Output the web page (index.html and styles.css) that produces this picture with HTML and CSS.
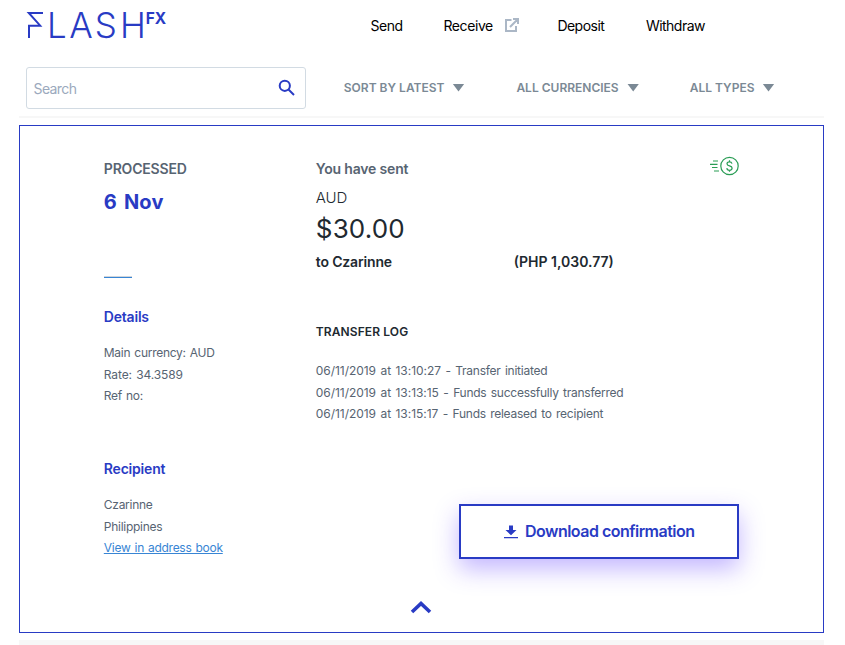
FILE: index.html
```html
<!DOCTYPE html>
<html lang="en">
<head>
<meta charset="utf-8">
<title>FlashFX</title>
<link rel="stylesheet" href="styles.css">
</head>
<body>
<header class="header">
  <svg class="logo" width="146" height="42" viewBox="0 -8 146 42" role="img" aria-label="FlashFX">
    <path class="logo-mark" d="M18 5H3.800L15.200 17.700H4V30"/>
    <text class="logo-name" y="30" x="22.700 45.600 72 98" transform="scale(.97 1)">LASH</text>
    <text class="logo-suffix" x="120.800" y="16" textLength="20.500" lengthAdjust="spacingAndGlyphs">FX</text>
  </svg>
  <nav class="nav">
    <a class="send">Send</a>
    <a class="receive">Receive</a>
    <svg class="external" width="14" height="14" viewBox="0 0 14 14"><path d="M6.500 2H1v11h10V8M8 1h5v5M13 1L5 9"/></svg>
    <a class="deposit">Deposit</a>
    <a class="withdraw">Withdraw</a>
  </nav>
</header>
<section class="filters">
  <div class="search">
    <span>Search</span>
    <svg width="18" height="18" viewBox="0 0 18 18"><circle cx="6.800" cy="6.800" r="5.100"/><path d="M10.500 10.500L16 16"/></svg>
  </div>
  <div class="filter latest"><span>SORT BY LATEST</span><i></i></div>
  <div class="filter currencies"><span>ALL CURRENCIES</span><i></i></div>
  <div class="filter types"><span>ALL TYPES</span><i></i></div>
</section>
<main class="card">
  <div class="columns">
    <div class="summary">
      <div class="status"><span>PROCESSED</span></div>
      <div class="date">6 Nov</div>
      <div class="rule"></div>
      <h3>Details</h3>
      <div class="lines">
        <p>Main currency: AUD</p>
        <p class="rate">Rate: 34.3589</p>
        <p>Ref no:</p>
      </div>
      <h3 class="recipient">Recipient</h3>
      <div class="lines">
        <p>Czarinne</p>
        <p>Philippines</p>
        <p><a>View in address book</a></p>
      </div>
    </div>
    <div class="transfer">
      <div class="sent">
        <span>You have sent</span>
        <svg width="29" height="20" viewBox="0 0 29 20"><circle cx="19.500" cy="10" r="8.700"/><path d="M3 5h5M0 8.300h7.500M2 11.500h5.500M4 15h5M22 7.600C21.600 6.200 20.700 5.800 19.500 5.800c-1.500 0-2.500.8-2.500 2 0 2.900 5.100 1.400 5.100 4.300 0 1.400-1.100 2.200-2.600 2.200s-2.500-.8-2.700-2.200M19.500 4.300v1.500M19.500 14.300v1.500"/></svg>
      </div>
      <div class="currency">AUD</div>
      <div class="amount">$30.00</div>
      <div class="to"><span class="payee">to Czarinne</span><span class="converted">(PHP 1,030.77)</span></div>
      <h4>TRANSFER LOG</h4>
      <div class="lines log">
        <p><span class="time">06/11/2019 at 13:10:27 -</span> Transfer initiated</p>
        <p><span class="time">06/11/2019 at 13:13:15 -</span> Funds successfully transferred</p>
        <p><span class="time">06/11/2019 at 13:15:17 -</span> Funds released to recipient</p>
      </div>
      <button class="download">
        <svg width="14" height="14" viewBox="0 0 14 14"><path d="M5 0.500h4v4.500h3.500L7 10.300 1.500 5H5zM0 12h14v1.300H0z"/></svg>
        <span>Download confirmation</span>
      </button>
    </div>
  </div>
  <svg class="collapse" width="22" height="14" viewBox="0 0 22 14"><path d="M2 12L11 3.500 20 12"/></svg>
</main>
<div class="next-card"></div>
</body>
</html>
```
FILE: styles.css
```css
* { box-sizing: border-box; }
body {
  margin: 0;
  height: 645px;
  overflow: hidden;
  background: #fff;
  color: #212930;
  font-family: Inter, "Liberation Sans", sans-serif;
}
h3, h4, p { margin: 0; }
svg { display: block; flex: none; fill: none; overflow: visible; }
.header { display: flex; height: 67px; padding: 0 0 0 25px; }
.logo-mark { stroke: #293bc4; stroke-width: 2; }
.logo-name { fill: #293bc4; font-size: 36px; font-weight: 300; }
.logo-suffix { fill: #293bc4; font-size: 16.500px; font-weight: 700; }
.nav {
  display: flex;
  height: 20px;
  margin: 16px 0 0 199.600px;
  color: #000;
  font-size: 14px;
  line-height: 20px;
  letter-spacing: -0.520px;
  white-space: nowrap;
}
.send { width: 72.800px; }
.receive { width: 61.600px; letter-spacing: -0.400px; }
.external { width: 14px; margin: 2px 38.400px 0 0; stroke: #abb7c6; stroke-width: 2; }
.deposit { width: 88.500px; }
.filters {
  display: flex;
  align-items: flex-start;
  height: 51px;
  margin: 0 21px 0 19px;
  padding-left: 7px;
  border-bottom: 2px solid #f7f7f7;
}
.search {
  display: flex;
  justify-content: space-between;
  width: 280px;
  height: 42px;
  padding: 11px 9px 0 6.500px;
  border: 1px solid #d2dbe3;
  border-radius: 3px;
  color: #9ba9bd;
  font-size: 14px;
  line-height: 20px;
  letter-spacing: -0.600px;
}
.search svg { stroke: #293bc4; stroke-width: 2; }
.filter {
  display: flex;
  align-items: center;
  height: 41px;
  color: #7b8995;
  font-size: 12px;
  font-weight: 600;
  white-space: nowrap;
}
.filter i {
  width: 12px;
  height: 8px;
  margin-left: 8px;
  background: #7b8995;
  clip-path: polygon(0 0, 100% 0, 50% 100%);
}
.latest { width: 172.600px; margin-left: 37.800px; }
.currencies { width: 173.300px; }
.currencies i { margin-left: 8.500px; }
.card {
  width: 805px;
  height: 508px;
  margin: 7px 0 0 19px;
  padding: 33px 84px 0 83.800px;
  border: 1px solid #293bc4;
}
.columns { display: flex; height: 442px; }
.summary { width: 212px; }
.transfer { width: 423.200px; }
.status, .sent {
  height: 20px;
  color: #576472;
  font-size: 14px;
  font-weight: 600;
  line-height: 20px;
  letter-spacing: -0.180px;
}
.date { height: 30px; margin-top: 8px; color: #293bc4; font-size: 20px; font-weight: 700; line-height: 31px; letter-spacing: 0.200px; word-spacing: 2px; }
.rule { width: 28px; height: 2px; margin: 59px 0 29px; border-top: 1px solid #d1d5da; border-bottom: 1px solid #3885d4; }
h3 { height: 20px; color: #293bc4; font-size: 14px; font-weight: 600; line-height: 20px; letter-spacing: -0.200px; }
.lines { margin-top: 15px; color: #576472; font-size: 12px; line-height: 21.500px; letter-spacing: -0.270px; word-spacing: 0.900px; white-space: nowrap; }
.lines a { color: #3885d4; text-decoration: underline; }
.rate { letter-spacing: -0.100px; }
.recipient { margin-top: 52.500px; }
.sent { display: flex; justify-content: space-between; }
.sent svg { margin: -3px -0.500px 0 0; stroke: #2a9d55; stroke-width: 1.200; }
.currency { height: 20px; margin-top: 9px; font-size: 15px; font-weight: 300; line-height: 20px; letter-spacing: -0.100px; }
.amount { height: 34px; margin-top: 4px; font-size: 26px; line-height: 34px; letter-spacing: 0.150px; }
.to { display: flex; height: 20px; margin-top: 6px; font-size: 14px; font-weight: 600; line-height: 19px; }
.payee { width: 198px; letter-spacing: -0.160px; }
h4 { height: 16px; margin-top: 52px; font-size: 12px; font-weight: 600; line-height: 16px; letter-spacing: 0.100px; }
.log { margin-top: 20px; letter-spacing: -0.250px; word-spacing: 1.200px; }
.time { letter-spacing: -0.050px; }
.download {
  display: flex;
  align-items: center;
  justify-content: center;
  gap: 7.500px;
  width: 280px;
  height: 55px;
  margin: 79.500px 0 0 143.200px;
  padding: 0 0 1px;
  border: 2px solid #293bc4;
  background: #fff;
  box-shadow: 0 10px 25px rgba(80, 40, 255, 0.340);
  color: #293bc4;
  font: 600 16px/20px Inter, sans-serif;
  letter-spacing: -0.520px;
  white-space: nowrap;
}
.download path { fill: #293bc4; }
.download svg { position: relative; top: 1px; }
.collapse { margin: -1px auto 0; stroke: #293bc4; stroke-width: 3.600; }
.next-card { height: 6px; margin: 7px 21px 0 19px; background: #f7f7f7; }
```
